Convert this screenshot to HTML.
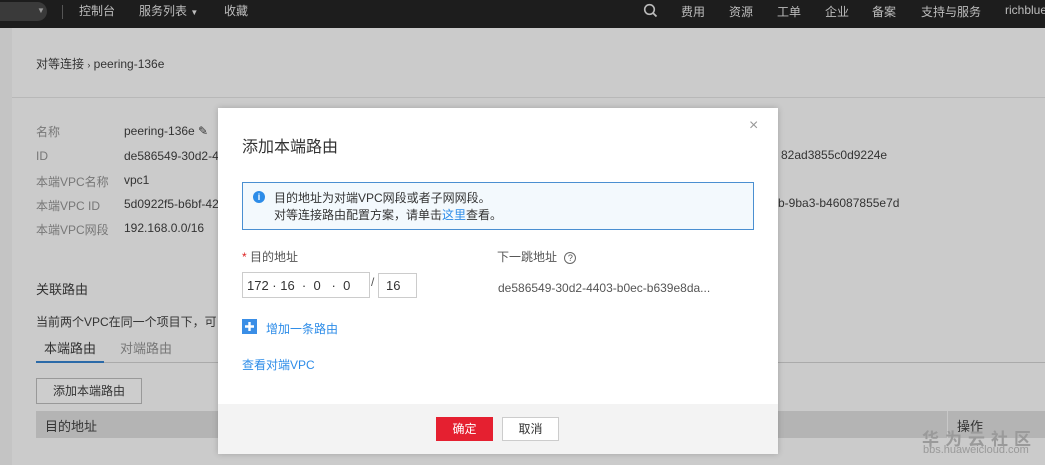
<!DOCTYPE html>
<html><head><meta charset="utf-8"><style>
*{margin:0;padding:0;box-sizing:border-box}
body{width:1045px;height:465px;overflow:hidden;position:relative;background:#cbcbcb;font-family:"Liberation Sans","Noto Sans CJK SC",sans-serif;font-size:12px;color:#333}
.a{position:absolute;white-space:nowrap}
.top{position:absolute;left:0;top:0;width:1045px;height:28px;background:#1d1d1d;color:#bdbdbd;font-size:12px}
.g{color:#777}
</style></head><body>
<div class="top">
<div class="a" style="left:-10px;top:2px;width:57px;height:19px;background:#3a3a3a;border-radius:10px"></div>
<div class="a" style="left:37px;top:6px;font-size:8px;color:#999">▼</div>
<div class="a" style="left:62px;top:5px;width:1px;height:14px;background:#555"></div>
<div class="a" style="left:79px;top:2px">控制台</div>
<div class="a" style="left:139px;top:2px">服务列表 <span style="font-size:8px">▼</span></div>
<div class="a" style="left:224px;top:2px">收藏</div>
<svg class="a" style="left:643px;top:3px" width="15" height="15" viewBox="0 0 15 15"><circle cx="6.5" cy="6.5" r="4.8" fill="none" stroke="#bbb" stroke-width="1.6"/><path d="M10 10l3.5 3.5" stroke="#bbb" stroke-width="1.8"/></svg>
<div class="a" style="left:681px;top:3px">费用</div>
<div class="a" style="left:729px;top:3px">资源</div>
<div class="a" style="left:777px;top:3px">工单</div>
<div class="a" style="left:825px;top:3px">企业</div>
<div class="a" style="left:872px;top:3px">备案</div>
<div class="a" style="left:921px;top:3px">支持与服务</div>
<div class="a" style="left:1005px;top:3px">richblue</div>
</div>
<div class="a" style="left:0;top:28px;width:12px;height:437px;background:#c4c4c4"></div>
<div class="a" style="left:12px;top:97px;width:1033px;height:1px;background:#b8b8b8"></div>
<div class="a" style="left:36px;top:55px;color:#333">对等连接 <span style="font-size:9px">›</span> peering-136e</div>
<div class="a g" style="left:36px;top:123px">名称</div><div class="a" style="left:124px;top:124px">peering-136e ✎</div>
<div class="a g" style="left:36px;top:149px">ID</div><div class="a" style="left:124px;top:149px">de586549-30d2-4</div>
<div class="a g" style="left:36px;top:173px">本端VPC名称</div><div class="a" style="left:124px;top:173px">vpc1</div>
<div class="a g" style="left:36px;top:197px">本端VPC ID</div><div class="a" style="left:124px;top:197px">5d0922f5-b6bf-42</div>
<div class="a g" style="left:36px;top:221px">本端VPC网段</div><div class="a" style="left:124px;top:221px">192.168.0.0/16</div>
<div class="a" style="left:781px;top:148px">82ad3855c0d9224e</div>
<div class="a" style="left:778px;top:196px">b-9ba3-b46087855e7d</div>
<div class="a" style="left:36px;top:279px;font-size:13px">关联路由</div>
<div class="a" style="left:36px;top:313px">当前两个VPC在同一个项目下，可</div>
<div class="a" style="left:44px;top:338px;font-size:13px">本端路由</div>
<div class="a g" style="left:120px;top:338px;font-size:13px">对端路由</div>
<div class="a" style="left:36px;top:362px;width:1009px;height:1px;background:#aaa"></div>
<div class="a" style="left:36px;top:361px;width:68px;height:2px;background:#2b6aa8"></div>
<div class="a" style="left:36px;top:378px;width:106px;height:26px;border:1px solid #999;background:#cdcdcd;text-align:center;line-height:24px">添加本端路由</div>
<div class="a" style="left:36px;top:411px;width:1009px;height:27px;background:#b4b4b4"></div>
<div class="a" style="left:45px;top:416px;font-size:13px">目的地址</div>
<div class="a" style="left:947px;top:411px;width:1px;height:27px;background:#c8c8c8"></div>
<div class="a" style="left:957px;top:416px;font-size:13px">操作</div>
<div class="a" style="left:922px;top:425px;font-size:17px;color:#9a9a9a;letter-spacing:6px;font-weight:bold">华为云社区</div>
<div class="a" style="left:923px;top:444px;font-size:11px;color:#999">bbs.huaweicloud.com</div>
<!-- modal -->
<div class="a" style="left:218px;top:108px;width:560px;height:346px;background:#fff;box-shadow:0 0 6px rgba(0,0,0,.2)">
<div class="a" style="left:0;top:296px;width:560px;height:50px;background:#f3f3f3"></div>
<div class="a" style="left:531px;top:9px;font-size:16px;color:#999">×</div>
<div class="a" style="left:24px;top:25px;font-size:16px;color:#333">添加本端路由</div>
<div class="a" style="left:24px;top:74px;width:512px;height:48px;border:1px solid #4a8fd1;background:#f3f9fd"></div>
<div class="a" style="left:35px;top:83px;width:12px;height:12px;border-radius:50%;background:#2d8ce8;color:#fff;font-size:9px;text-align:center;line-height:12px;font-weight:bold">i</div>
<div class="a" style="left:56px;top:81px;color:#333">目的地址为对端VPC网段或者子网网段。</div>
<div class="a" style="left:56px;top:98px;color:#333">对等连接路由配置方案，请单击<span style="color:#2d8ce8">这里</span>查看。</div>
<div class="a" style="left:24px;top:140px;color:#555"><span style="color:#d22">*</span> 目的地址</div>
<div class="a" style="left:279px;top:140px;color:#555">下一跳地址 <span style="display:inline-block;width:12px;height:12px;border:1px solid #666;border-radius:50%;font-size:9px;text-align:center;line-height:10px;margin-left:4px">?</span></div>
<div class="a" style="left:24px;top:164px;width:128px;height:26px;border:1px solid #ccc;padding:5px 4px;font-size:13px;color:#333">172 · 16 &nbsp;· &nbsp;0 &nbsp; · &nbsp;0</div>
<div class="a" style="left:153px;top:167px;color:#555">/</div>
<div class="a" style="left:160px;top:165px;width:39px;height:25px;border:1px solid #ccc;padding:4px 7px;font-size:13px">16</div>
<div class="a" style="left:280px;top:173px;color:#555">de586549-30d2-4403-b0ec-b639e8da...</div>
<div class="a" style="left:24px;top:211px;width:15px;height:15px;background:#3a8ee6"><svg width="15" height="15" viewBox="0 0 15 15"><path d="M7.5 3v9M3 7.5h9" stroke="#fff" stroke-width="2.4"/></svg></div>
<div class="a" style="left:48px;top:212px;color:#2d8ce8">增加一条路由</div>
<div class="a" style="left:24px;top:248px;color:#2d8ce8">查看对端VPC</div>
<div class="a" style="left:218px;top:309px;width:57px;height:24px;background:#e52030;color:#fff;text-align:center;line-height:24px">确定</div>
<div class="a" style="left:284px;top:309px;width:57px;height:24px;background:#fff;border:1px solid #ccc;text-align:center;line-height:22px;color:#333">取消</div>
</div>
</body></html>
